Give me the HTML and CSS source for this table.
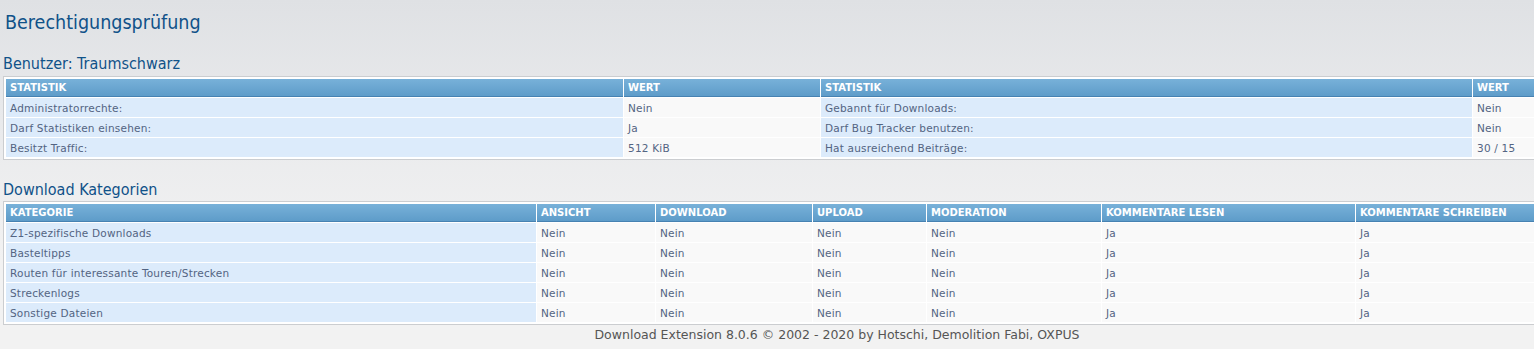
FILE: index.html
```html
<!DOCTYPE html>
<html lang="de">
<head>
    <meta charset="UTF-8">
    <title>Berechtigungsprüfung</title>
    <link rel="stylesheet" href="styles.css">
</head>
<body>

<div class="wrap">
    <h1>Berechtigungsprüfung</h1>

    <h3>Benutzer: Traumschwarz</h3>
    <table class="table1">
        <colgroup>
            <col style="width: 617px">
            <col style="width: 196px">
            <col style="width: 651px">
            <col>
        </colgroup>
        <thead>
            <tr><th>Statistik</th><th>Wert</th><th>Statistik</th><th>Wert</th></tr>
        </thead>
        <tbody>
            <tr><td class="label">Administratorrechte:</td><td>Nein</td><td class="label">Gebannt für Downloads:</td><td>Nein</td></tr>
            <tr><td class="label">Darf Statistiken einsehen:</td><td>Ja</td><td class="label">Darf Bug Tracker benutzen:</td><td>Nein</td></tr>
            <tr><td class="label">Besitzt Traffic:</td><td>512 KiB</td><td class="label">Hat ausreichend Beiträge:</td><td>30 / 15</td></tr>
        </tbody>
    </table>

    <h3 class="second">Download Kategorien</h3>
    <table class="table1">
        <colgroup>
            <col style="width: 530px">
            <col style="width: 118px">
            <col style="width: 156px">
            <col style="width: 113px">
            <col style="width: 174px">
            <col style="width: 253px">
            <col>
        </colgroup>
        <thead>
            <tr><th>Kategorie</th><th>Ansicht</th><th>Download</th><th>Upload</th><th>Moderation</th><th>Kommentare lesen</th><th>Kommentare schreiben</th></tr>
        </thead>
        <tbody>
            <tr><td class="label">Z1-spezifische Downloads</td><td>Nein</td><td>Nein</td><td>Nein</td><td>Nein</td><td>Ja</td><td>Ja</td></tr>
            <tr><td class="label">Basteltipps</td><td>Nein</td><td>Nein</td><td>Nein</td><td>Nein</td><td>Ja</td><td>Ja</td></tr>
            <tr><td class="label">Routen für interessante Touren/Strecken</td><td>Nein</td><td>Nein</td><td>Nein</td><td>Nein</td><td>Ja</td><td>Ja</td></tr>
            <tr><td class="label">Streckenlogs</td><td>Nein</td><td>Nein</td><td>Nein</td><td>Nein</td><td>Ja</td><td>Ja</td></tr>
            <tr><td class="label">Sonstige Dateien</td><td>Nein</td><td>Nein</td><td>Nein</td><td>Nein</td><td>Ja</td><td>Ja</td></tr>
        </tbody>
    </table>

    <div class="copyright">Download Extension 8.0.6 &copy; 2002 - 2020 by Hotschi, Demolition Fabi, OXPUS</div>
</div>

</body>
</html>
```

FILE: styles.css
```css
body {
    margin: 0;
    padding: 0 0 0 3px;
    background: linear-gradient(#dfe1e4 0px, #e9eaec 120px, #f2f2f2 260px) no-repeat;
    background-color: #f2f2f2;
    font-family: "DejaVu Sans", Verdana, sans-serif;
    color: #536482;
    overflow: hidden;
}
.wrap {
    width: 1668px;
}
h1 {
    margin: 0;
    padding: 12px 0 0 2px;
    height: 45px;
    box-sizing: border-box;
    font-family: "DejaVu Sans Condensed", "DejaVu Sans", sans-serif;
    font-size: 19.5px;
    font-weight: normal;
    line-height: 22px;
    color: #105289;
}
h3 {
    margin: 0;
    padding: 9px 0 0 0;
    height: 31px;
    box-sizing: border-box;
    font-family: "DejaVu Sans Condensed", "DejaVu Sans", sans-serif;
    font-size: 16px;
    font-weight: normal;
    line-height: 20px;
    color: #105289;
}
h3.second {
    height: 41px;
    padding-top: 20px;
}
.table1 {
    width: 100%;
    table-layout: fixed;
    border-collapse: separate;
    border-spacing: 1px;
    padding: 1px;
    background-color: #fff;
    border: 1px solid #cbcdd0;
}
.table1 th {
    height: 17px;
    padding: 0 4px;
    text-align: left;
    text-transform: uppercase;
    font-size: 10px;
    font-weight: bold;
    color: #fff;
    background: linear-gradient(#78b1d9, #5e9cc9);
    border-bottom: 1px solid #4782b2;
    white-space: nowrap;
    overflow: hidden;
}
.table1 td {
    height: 19px;
    padding: 0 4px;
    font-size: 10.5px;
    letter-spacing: 0.2px;
    background-color: #f9f9f9;
    white-space: nowrap;
    overflow: hidden;
}
.table1 td.label {
    background-color: #dcebfb;
}
.copyright {
    text-align: center;
    font-size: 12.5px;
    line-height: 20px;
    color: #555;
}
```
